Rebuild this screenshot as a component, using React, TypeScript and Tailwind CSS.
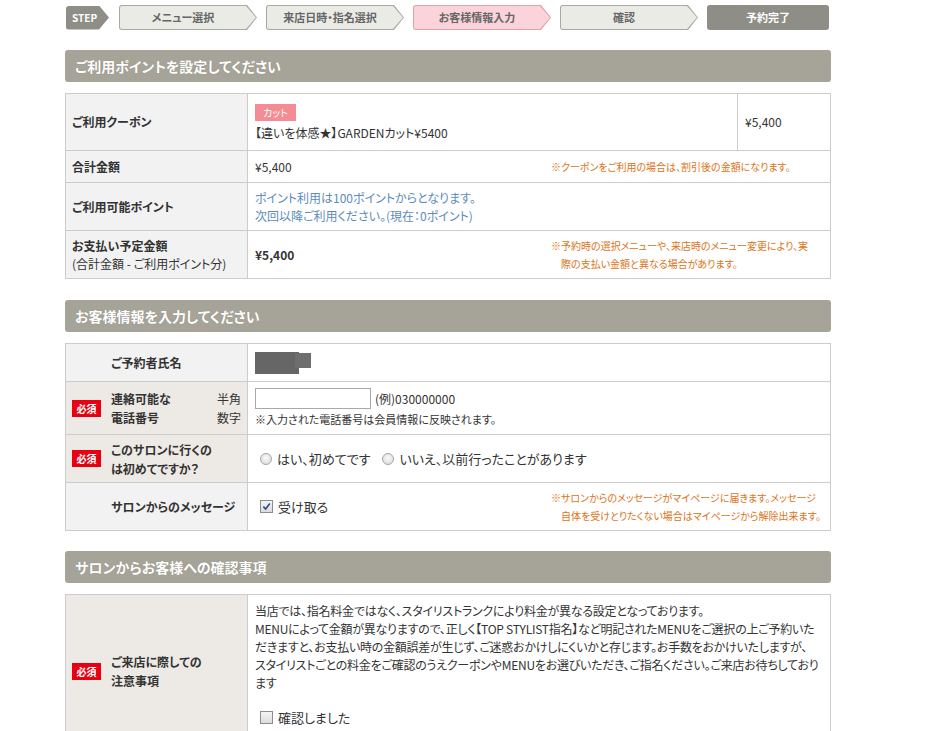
import React from "react";

const arrowClip =
  "[clip-path:polygon(0_0,calc(100%-10px)_0,100%_50%,calc(100%-10px)_100%,0_100%)]";

function Step({ label, active }: { label: string; active?: boolean }) {
  return (
    <div
      className={`h-[25px] w-[138px] rounded-l-[3px] p-px ${arrowClip} ${
        active ? "bg-[#e3a0ab]" : "bg-[#a9a9a3]"
      }`}
    >
      <div
        className={`flex h-full w-full items-center justify-center rounded-l-[2px] pr-[10px] text-[11px] font-bold ${arrowClip} ${
          active ? "bg-[#fbd3da] text-[#666]" : "bg-[#ebebe6] text-[#666]"
        }`}
      >
        {label}
      </div>
    </div>
  );
}

function SectionHeader({ title }: { title: string }) {
  return (
    <div className="flex h-[32px] items-center rounded-[3px] bg-[#a6a398] pl-[10px] text-[14px] font-bold text-white [text-shadow:0_0_1px_rgba(0,0,0,0.2)]">
      {title}
    </div>
  );
}

function Required() {
  return (
    <span className="inline-flex h-[17px] w-[29px] shrink-0 items-center justify-center bg-[#e60012] text-[10px] text-white">
      必須
    </span>
  );
}

function Note({ children }: { children: React.ReactNode }) {
  return (
    <p className="w-[264px] shrink-0 whitespace-nowrap pl-[10px] -indent-[10px] text-[10px] leading-[18px] text-[#dc7418]">
      {children}
    </p>
  );
}

function Radio() {
  return (
    <span className="inline-block h-[12px] w-[12px] rounded-full border border-[#a8a8a8] bg-[radial-gradient(circle_at_50%_40%,#fafafa,#d6d6d6)]" />
  );
}

function Checkbox({ checked }: { checked?: boolean }) {
  return (
    <span className="inline-flex h-[13px] w-[13px] items-center justify-center border border-[#8c8c8c] bg-[linear-gradient(#f4f4f4,#dcdcdc)]">
      {checked && (
        <svg viewBox="0 0 10 10" className="h-[9px] w-[9px]">
          <path d="M1.5 5.2 L4 7.8 L8.7 1.8" fill="none" stroke="#2a4b9b" strokeWidth="1.8" />
        </svg>
      )}
    </span>
  );
}

const label = "border border-[#cccccc] px-[6px] align-middle text-left font-bold";
const cell = "border border-[#cccccc] px-[7px] align-middle";

export default function App() {
  return (
    <div className="min-h-screen bg-white font-['Noto_Sans_CJK_JP','Noto_Sans',sans-serif] text-[12px] text-[#333] [font-feature-settings:'palt']">
      <div className="ml-[65px] w-[766px] pt-[5px]">
        {/* step bar */}
        <div className="flex items-center gap-[10px] pl-px">
          <div
            className={`flex h-[24px] w-[43px] items-center rounded-l-[3px] bg-[#8e8e86] pl-[6px] text-[10px] font-bold text-white ${arrowClip}`}
          >
            STEP
          </div>
          <div className="flex gap-[9px]">
            <Step label="メニュー選択" />
            <Step label="来店日時・指名選択" />
            <Step label="お客様情報入力" active />
            <Step label="確認" />
            <div className="flex h-[25px] w-[122px] items-center justify-center rounded-[3px] bg-[#8e8d86] text-[11px] font-bold text-white">
              予約完了
            </div>
          </div>
        </div>

        {/* points */}
        <div className="mt-[20px]">
          <SectionHeader title="ご利用ポイントを設定してください" />
        </div>
        <table className="mt-[11px] w-full table-fixed border-collapse">
          <colgroup>
            <col className="w-[182px]" />
            <col />
            <col className="w-[93px]" />
          </colgroup>
          <tbody>
            <tr className="h-[57px]">
              <th className={`${label} bg-[#f2f2f2]`}>ご利用クーポン</th>
              <td className={cell}>
                <span className="inline-flex h-[17px] items-center bg-[#f68c93] px-[8px] text-[10px] text-white">
                  カット
                </span>
                <div className="mt-[3px]">【違いを体感★】GARDENカット¥5400</div>
              </td>
              <td className={cell}>¥5,400</td>
            </tr>
            <tr className="h-[32px]">
              <th className={`${label} bg-[#f2f2f2]`}>合計金額</th>
              <td className={cell} colSpan={2}>
                <div className="flex items-center justify-between pr-[8px]">
                  <span>¥5,400</span>
                  <Note>※クーポンをご利用の場合は、割引後の金額になります。</Note>
                </div>
              </td>
            </tr>
            <tr className="h-[48px]">
              <th className={`${label} bg-[#f2f2f2]`}>ご利用可能ポイント</th>
              <td className={`${cell} leading-[18px] text-[#5b8cba]`} colSpan={2}>
                ポイント利用は100ポイントからとなります。
                <br />
                次回以降ご利用ください。(現在：0ポイント)
              </td>
            </tr>
            <tr className="h-[48px]">
              <th className={`${label} bg-[#f2f2f2] leading-[18px]`}>
                お支払い予定金額
                <br />
                <span className="font-normal">(合計金額 - ご利用ポイント分)</span>
              </th>
              <td className={cell} colSpan={2}>
                <div className="flex items-center justify-between pr-[8px]">
                  <span className="font-bold">¥5,400</span>
                  <Note>
                    ※予約時の選択メニューや、来店時のメニュー変更により、実
                    <br />
                    際の支払い金額と異なる場合があります。
                  </Note>
                </div>
              </td>
            </tr>
          </tbody>
        </table>

        {/* customer */}
        <div className="mt-[21px]">
          <SectionHeader title="お客様情報を入力してください" />
        </div>
        <table className="mt-[11px] w-full table-fixed border-collapse">
          <colgroup>
            <col className="w-[182px]" />
            <col />
          </colgroup>
          <tbody>
            <tr className="h-[38px]">
              <th className={`${label} bg-[#f2f2f2] pl-[45px]`}>ご予約者氏名</th>
              <td className={cell}>
                <div className="relative h-[22px] w-[56px]">
                  <div className="absolute left-0 top-0 h-[22px] w-[44px] bg-[#666]" />
                  <div className="absolute left-[40px] top-[1px] h-[15px] w-[16px] bg-[#6e6e6e]" />
                </div>
              </td>
            </tr>
            <tr className="h-[53px]">
              <th className={`${label} bg-[#edeae5]`}>
                <div className="flex items-center">
                  <Required />
                  <span className="ml-[10px] leading-[19px]">
                    連絡可能な
                    <br />
                    電話番号
                  </span>
                  <span className="ml-auto text-right font-normal leading-[19px]">
                    半角
                    <br />
                    数字
                  </span>
                </div>
              </th>
              <td className={cell}>
                <div className="flex items-center">
                  <input
                    type="text"
                    className="h-[21px] w-[116px] border border-[#a9a9a9] bg-white"
                  />
                  <span className="ml-[4px]">(例)030000000</span>
                </div>
                <div className="mt-[2px] text-[11px]">※入力された電話番号は会員情報に反映されます。</div>
              </td>
            </tr>
            <tr className="h-[48px]">
              <th className={`${label} bg-[#edeae5]`}>
                <div className="flex items-center">
                  <Required />
                  <span className="ml-[10px] leading-[19px]">
                    このサロンに行くの
                    <br />
                    は初めてですか？
                  </span>
                </div>
              </th>
              <td className={cell}>
                <div className="flex items-center pl-[5px] text-[13px]">
                  <Radio />
                  <span className="ml-[5px]">はい、初めてです</span>
                  <span className="ml-[12px] flex">
                    <Radio />
                  </span>
                  <span className="ml-[5px]">いいえ、以前行ったことがあります</span>
                </div>
              </td>
            </tr>
            <tr className="h-[48px]">
              <th className={`${label} bg-[#f2f2f2] pl-[45px]`}>サロンからのメッセージ</th>
              <td className={cell}>
                <div className="flex items-center justify-between pr-[8px]">
                  <div className="flex items-center pl-[5px] text-[13px]">
                    <Checkbox checked />
                    <span className="ml-[5px]">受け取る</span>
                  </div>
                  <Note>
                    ※サロンからのメッセージがマイページに届きます。メッセージ
                    <br />
                    自体を受けとりたくない場合はマイページから解除出来ます。
                  </Note>
                </div>
              </td>
            </tr>
          </tbody>
        </table>

        {/* salon notes */}
        <div className="mt-[20px]">
          <SectionHeader title="サロンからお客様への確認事項" />
        </div>
        <table className="mt-[11px] w-full table-fixed border-collapse">
          <colgroup>
            <col className="w-[182px]" />
            <col />
          </colgroup>
          <tbody>
            <tr>
              <th className={`${label} bg-[#edeae5]`}>
                <div className="flex items-center">
                  <Required />
                  <span className="ml-[10px] leading-[19px]">
                    ご来店に際しての
                    <br />
                    注意事項
                  </span>
                </div>
              </th>
              <td className={`${cell} pb-[20px] pt-[7px]`}>
                <p className="whitespace-nowrap leading-[18px] tracking-[-0.25px]">
                  当店では、指名料金ではなく、スタイリストランクにより料金が異なる設定となっております。
                  <br />
                  MENUによって金額が異なりますので、正しく【TOP STYLIST指名】など明記されたMENUをご選択の上ご予約いた
                  <br />
                  だきますと、お支払い時の金額誤差が生じず、ご迷惑おかけしにくいかと存じます。お手数をおかけいたしますが、
                  <br />
                  スタイリストごとの料金をご確認のうえクーポンやMENUをお選びいただき、ご指名ください。ご来店お待ちしており
                  <br />
                  ます
                </p>
                <div className="mt-[16px] flex items-center pl-[5px] text-[13px]">
                  <Checkbox />
                  <span className="ml-[5px]">確認しました</span>
                </div>
              </td>
            </tr>
          </tbody>
        </table>
      </div>
    </div>
  );
}
